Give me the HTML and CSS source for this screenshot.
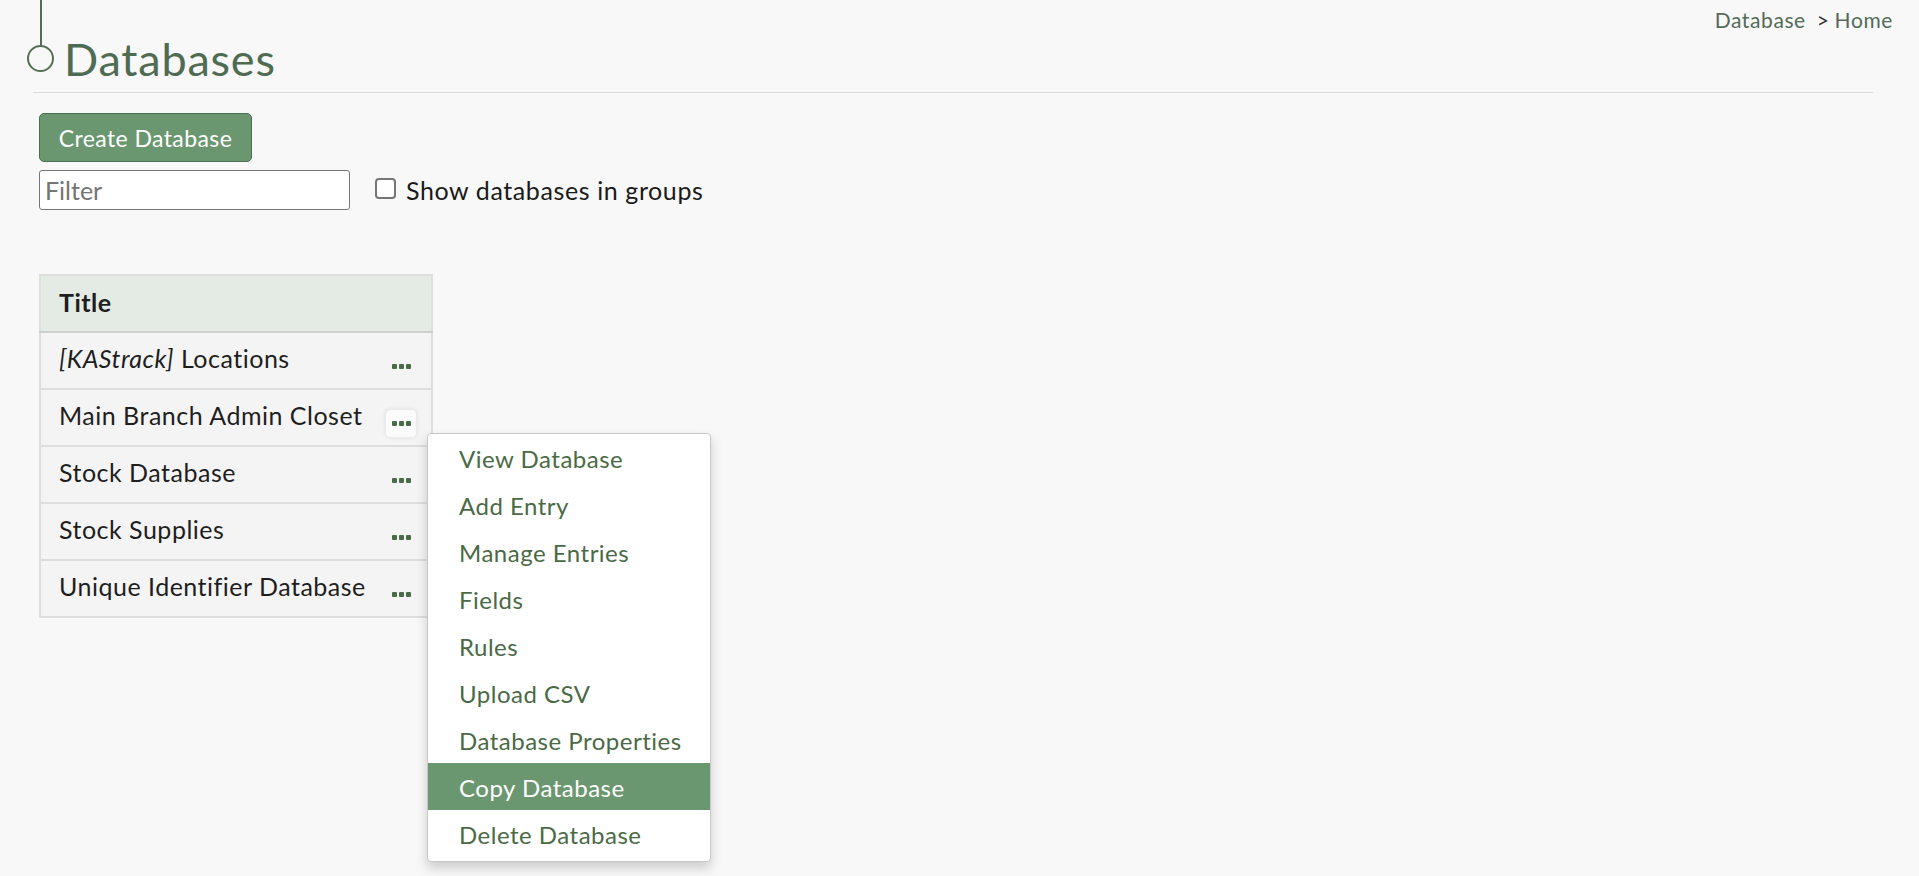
FILE: index.html
```html
<!DOCTYPE html>
<html lang="en">
<head>
<meta charset="UTF-8">
<title>Databases</title>
<link rel="stylesheet" href="styles.css">
</head>
<body>
<header class="page-head">
    <div class="marker">
        <span class="marker-line"></span>
        <span class="marker-dot"></span>
    </div>
    <h1 class="page-title">Databases</h1>
    <nav class="crumbs">
        <a href="#">Database</a><span class="crumb-sep">&gt;</span><a href="#">Home</a>
    </nav>
</header>
<hr class="head-rule">

<main class="content">
    <button class="btn-create">Create Database</button>

    <div class="filter-row">
        <input class="filter" type="text" placeholder="Filter">
        <label class="group-toggle">
            <input type="checkbox">
            Show databases in groups
        </label>
    </div>

    <div class="table-wrap">
        <table class="db-table">
            <thead>
                <tr><th colspan="2">Title</th></tr>
            </thead>
            <tbody>
                <tr>
                    <td class="name"><em>[KAStrack]</em> Locations</td>
                    <td class="actions"><button class="more"><svg width="19" height="5" viewBox="0 0 19 5"><rect x="0" y="0" width="5" height="5" rx="1"/><rect x="7" y="0" width="5" height="5" rx="1"/><rect x="14" y="0" width="5" height="5" rx="1"/></svg></button></td>
                </tr>
                <tr>
                    <td class="name">Main Branch Admin Closet</td>
                    <td class="actions"><button class="more open"><svg width="19" height="5" viewBox="0 0 19 5"><rect x="0" y="0" width="5" height="5" rx="1"/><rect x="7" y="0" width="5" height="5" rx="1"/><rect x="14" y="0" width="5" height="5" rx="1"/></svg></button></td>
                </tr>
                <tr>
                    <td class="name">Stock Database</td>
                    <td class="actions"><button class="more"><svg width="19" height="5" viewBox="0 0 19 5"><rect x="0" y="0" width="5" height="5" rx="1"/><rect x="7" y="0" width="5" height="5" rx="1"/><rect x="14" y="0" width="5" height="5" rx="1"/></svg></button></td>
                </tr>
                <tr>
                    <td class="name">Stock Supplies</td>
                    <td class="actions"><button class="more"><svg width="19" height="5" viewBox="0 0 19 5"><rect x="0" y="0" width="5" height="5" rx="1"/><rect x="7" y="0" width="5" height="5" rx="1"/><rect x="14" y="0" width="5" height="5" rx="1"/></svg></button></td>
                </tr>
                <tr>
                    <td class="name">Unique Identifier Database</td>
                    <td class="actions"><button class="more"><svg width="19" height="5" viewBox="0 0 19 5"><rect x="0" y="0" width="5" height="5" rx="1"/><rect x="7" y="0" width="5" height="5" rx="1"/><rect x="14" y="0" width="5" height="5" rx="1"/></svg></button></td>
                </tr>
            </tbody>
        </table>

        <!-- actions menu, opened from the second row -->
        <ul class="menu">
            <li><a href="#">View Database</a></li>
            <li><a href="#">Add Entry</a></li>
            <li><a href="#">Manage Entries</a></li>
            <li><a href="#">Fields</a></li>
            <li><a href="#">Rules</a></li>
            <li><a href="#">Upload CSV</a></li>
            <li><a href="#">Database Properties</a></li>
            <li><a href="#" class="active">Copy Database</a></li>
            <li><a href="#">Delete Database</a></li>
        </ul>
    </div>
</main>
</body>
</html>
```

FILE: styles.css
```css
body, html {
    margin: 0;
    padding: 0;
    background-color: #f8f8f8;
    font-family: Lato, "Open Sans", sans-serif;
    color: #1e1e1e;
}
body {
    min-height: 100vh;
}

/* Title bar with the timeline marker */
.page-head {
    display: flex;
    align-items: flex-start;
    padding-left: 27px;
}
.marker {
    display: flex;
    flex-direction: column;
    align-items: center;
    width: 27px;
}
.marker-line {
    width: 2px;
    height: 45px;
    background-color: #537055;
}
.marker-dot {
    width: 27px;
    height: 27px;
    border: 2px solid #537055;
    border-radius: 50%;
    box-sizing: border-box;
}
.page-title {
    margin: 37px 0 0 10px;
    font-size: 45px;
    font-weight: normal;
    letter-spacing: 0.8px;
    line-height: 45px;
    color: #4f6b52;
}
.crumbs {
    margin: 7px 26px 0 auto;
    font-size: 21px;
    letter-spacing: 0.6px;
    line-height: 25px;
}
.crumbs a {
    color: #536b58;
    text-decoration: none;
}
.crumb-sep {
    color: #333;
    margin: 0 5px 0 11px;
}
.head-rule {
    margin: 10px 46px 0 33px;
    border: 0;
    border-top: 1px solid #dcdcdc;
}

.content {
    padding: 20px 0 0 39px;
}

.btn-create {
    font-family: inherit;
    font-size: 23px;
    letter-spacing: 0.4px;
    color: #fff;
    background-color: #6a9770;
    border: 1px solid #4d6e52;
    border-radius: 5px;
    padding: 0;
    width: 213px;
    height: 49px;
    cursor: pointer;
}

.filter-row {
    display: flex;
    align-items: center;
    margin-top: 8px;
}
.filter {
    width: 311px;
    height: 40px;
    box-sizing: border-box;
    font-family: inherit;
    font-size: 25px;
    padding: 2px 5px;
    border: 1px solid #767676;
    border-radius: 3px;
    background: #fff;
}
.filter::placeholder {
    color: #757575;
}
.group-toggle {
    display: flex;
    align-items: center;
    margin-left: 25px;
    font-size: 25px;
    letter-spacing: 0.6px;
    color: #1a1a1a;
}
.group-toggle input {
    appearance: none;
    width: 21px;
    height: 21px;
    margin: 0 10px 4px 0;
    border: 2px solid #767676;
    border-radius: 4px;
    background: #fff;
}

/* Database list */
.table-wrap {
    position: relative;
    display: inline-block;
    margin-top: 64px;
}
.db-table {
    width: 394px;
    border-collapse: collapse;
    border: 2px solid #dedede;
    font-size: 25px;
    letter-spacing: 0.5px;
    line-height: 29px;
}
.db-table th {
    text-align: left;
    font-weight: bold;
    background-color: #e4eae4;
    padding: 12px 18px 14px;
    border-bottom: 2px solid #cfcfcf;
}
.db-table td {
    background-color: #f4f4f4;
    border-top: 2px solid #dedede;
    padding: 11px 0 15px 18px;
    white-space: nowrap;
}
.db-table td.actions {
    padding: 19px 14px 0 10px;
    width: 32px;
    vertical-align: top;
}
.more {
    display: block;
    width: 32px;
    height: 29px;
    padding: 0;
    border: 1px solid transparent;
    border-radius: 5px;
    background: transparent;
    cursor: pointer;
}
.more svg {
    display: block;
    margin: 0 auto;
    fill: #4a6b47;
}
.more.open {
    background-color: #fbfbfb;
    border-color: #ebebeb;
    box-shadow: 0 0 4px rgba(0,0,0,0.08);
}

/* Row action menu */
.menu {
    position: absolute;
    left: 388px;
    top: 159px;
    z-index: 10;
    width: 284px;
    margin: 0;
    padding: 0 0 4px;
    list-style: none;
    background: #fff;
    border: 1px solid #c8c8c8;
    border-radius: 4px;
    box-shadow: 0 6px 12px rgba(0,0,0,0.18);
    box-sizing: border-box;
}
.menu a {
    display: block;
    padding: 10px 31px 8px;
    line-height: 29px;
    font-size: 24px;
    letter-spacing: 0.5px;
    white-space: nowrap;
    color: #4a6a45;
    text-decoration: none;
}
.menu a.active {
    background-color: #6a9670;
    color: #fff;
}
```
